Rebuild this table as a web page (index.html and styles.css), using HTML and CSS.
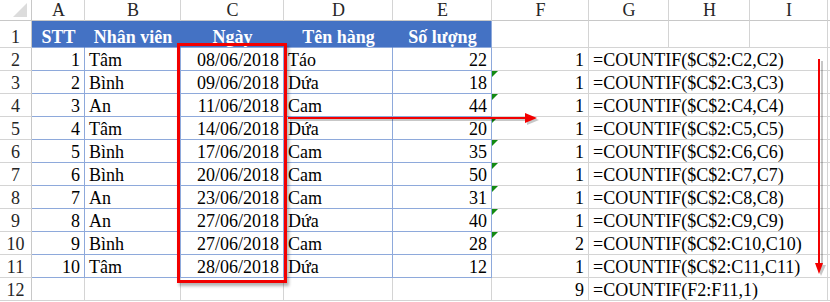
FILE: index.html
```html
<!DOCTYPE html>
<html>
<head>
<meta charset="utf-8">
<link rel="stylesheet" href="styles.css">
</head>
<body>
<div class="sheet">
  <div class="c corner"><span class="tri"></span></div>
  <div class="c hd">A</div><div class="c hd">B</div><div class="c hd">C</div><div class="c hd">D</div><div class="c hd">E</div><div class="c hd">F</div><div class="c hd">G</div><div class="c hd">H</div><div class="c hd">I</div><div class="c hd edge"></div>

  <div class="c rh">1</div>
  <div class="c th">STT</div><div class="c th">Nhân viên</div><div class="c th">Ngày</div><div class="c th">Tên hàng</div><div class="c th last">Số lượng</div>
  <div class="c"></div><div class="c"></div><div class="c"></div><div class="c"></div><div class="c edge"></div>

  <div class="c rh">2</div>
  <div class="c t r">1</div><div class="c t">Tâm</div><div class="c t r">08/06/2018</div><div class="c t">Táo</div><div class="c t r">22</div>
  <div class="c r">1</div><div class="c span3">=COUNTIF($C$2:C2,C2)</div><div class="c edge"></div>

  <div class="c rh">3</div>
  <div class="c t r">2</div><div class="c t">Bình</div><div class="c t r">09/06/2018</div><div class="c t">Dứa</div><div class="c t r">18</div>
  <div class="c r flag">1</div><div class="c span3">=COUNTIF($C$2:C3,C3)</div><div class="c edge"></div>

  <div class="c rh">4</div>
  <div class="c t r">3</div><div class="c t">An</div><div class="c t r">11/06/2018</div><div class="c t">Cam</div><div class="c t r">44</div>
  <div class="c r flag">1</div><div class="c span3">=COUNTIF($C$2:C4,C4)</div><div class="c edge"></div>

  <div class="c rh">5</div>
  <div class="c t r">4</div><div class="c t">Tâm</div><div class="c t r">14/06/2018</div><div class="c t">Dứa</div><div class="c t r">20</div>
  <div class="c r flag">1</div><div class="c span3">=COUNTIF($C$2:C5,C5)</div><div class="c edge"></div>

  <div class="c rh">6</div>
  <div class="c t r">5</div><div class="c t">Bình</div><div class="c t r">17/06/2018</div><div class="c t">Cam</div><div class="c t r">35</div>
  <div class="c r flag">1</div><div class="c span3">=COUNTIF($C$2:C6,C6)</div><div class="c edge"></div>

  <div class="c rh">7</div>
  <div class="c t r">6</div><div class="c t">Bình</div><div class="c t r">20/06/2018</div><div class="c t">Cam</div><div class="c t r">50</div>
  <div class="c r flag">1</div><div class="c span3">=COUNTIF($C$2:C7,C7)</div><div class="c edge"></div>

  <div class="c rh">8</div>
  <div class="c t r">7</div><div class="c t">An</div><div class="c t r">23/06/2018</div><div class="c t">Cam</div><div class="c t r">31</div>
  <div class="c r flag">1</div><div class="c span3">=COUNTIF($C$2:C8,C8)</div><div class="c edge"></div>

  <div class="c rh">9</div>
  <div class="c t r">8</div><div class="c t">An</div><div class="c t r">27/06/2018</div><div class="c t">Dứa</div><div class="c t r">40</div>
  <div class="c r flag">1</div><div class="c span3">=COUNTIF($C$2:C9,C9)</div><div class="c edge"></div>

  <div class="c rh">10</div>
  <div class="c t r">9</div><div class="c t">Bình</div><div class="c t r">27/06/2018</div><div class="c t">Cam</div><div class="c t r">28</div>
  <div class="c r flag">2</div><div class="c span3">=COUNTIF($C$2:C10,C10)</div><div class="c edge"></div>

  <div class="c rh">11</div>
  <div class="c t r">10</div><div class="c t">Tâm</div><div class="c t r">28/06/2018</div><div class="c t">Dứa</div><div class="c t r">12</div>
  <div class="c r">1</div><div class="c span3">=COUNTIF($C$2:C11,C11)</div><div class="c edge"></div>

  <div class="c rh">12</div>
  <div class="c"></div><div class="c"></div><div class="c"></div><div class="c"></div><div class="c"></div>
  <div class="c r">9</div><div class="c span3">=COUNTIF(F2:F11,1)</div><div class="c edge"></div>

  <div class="highlight"></div>
  <svg class="arrows" width="830" height="302" viewBox="0 0 830 302">
    <g class="shadow">
      <rect x="290" y="119" width="238" height="2"></rect>
      <polygon points="527,115 539,120 527,125"></polygon>
      <rect x="821" y="61" width="2" height="204"></rect>
      <polygon points="817,265 826,265 821,276"></polygon>
    </g>
    <g class="arrow">
      <rect x="288" y="117" width="238" height="2"></rect>
      <polygon points="525,113 537,118 525,123"></polygon>
      <rect x="818" y="59" width="2" height="204"></rect>
      <polygon points="815,263 823,263 819,274"></polygon>
    </g>
  </svg>
</div>
</body>
</html>
```

FILE: styles.css
```css
html, body {
  margin: 0;
  padding: 0;
  background: #ffffff;
}

.sheet {
  position: relative;
  display: grid;
  grid-template-columns: 32px 53px 96px 103px 109px 99px 97px 80px 81px 78px 2px;
  grid-template-rows: 21px 27px repeat(11, 23px);
  width: 830px;
  height: 302px;
  overflow: hidden;
  font-family: "Liberation Serif", "Times New Roman", serif;
  font-size: 18px;
  line-height: 20px;
  color: #000;
}

.c {
  box-sizing: border-box;
  border-right: 1px solid #d4d4d4;
  border-bottom: 1px solid #d4d4d4;
  display: flex;
  align-items: flex-end;
  padding: 0 3px 0 4px;
  white-space: nowrap;
  overflow: hidden;
  position: relative;
}

.edge {
  border-right: none;
}

.corner {
  border-color: #c8c8c8;
}

.tri {
  position: absolute;
  left: 13px;
  top: 3px;
  width: 0;
  height: 0;
  border-left: 14px solid transparent;
  border-bottom: 14px solid #dcdcdc;
}

.hd {
  justify-content: center;
  color: #262626;
  border-bottom-color: #c8c8c8;
}

.rh {
  justify-content: center;
  color: #262626;
  border-right-color: #c8c8c8;
  padding: 0;
}

.th {
  background: #4472c4;
  color: #ffffff;
  font-weight: bold;
  justify-content: center;
  border-right-color: #4472c4;
  border-bottom-color: #8ea9db;
}

.th.last {
  border-right-color: #8ea9db;
}

.t {
  border-right-color: #8ea9db;
  border-bottom-color: #8ea9db;
}

.r {
  justify-content: flex-end;
  padding-right: 4px;
}

.span3 {
  grid-column: span 3;
  overflow: visible;
}

.flag::before {
  content: "";
  position: absolute;
  left: 0;
  top: 0;
  width: 0;
  height: 0;
  border-top: 6px solid #138a13;
  border-right: 6px solid transparent;
}

.highlight {
  position: absolute;
  left: 177px;
  top: 43px;
  width: 110px;
  height: 240px;
  box-sizing: border-box;
  border: 3px solid #f20000;
  box-shadow: 2px 3px 3px rgba(0, 0, 0, 0.3);
  pointer-events: none;
}

.arrows {
  position: absolute;
  left: 0;
  top: 0;
  pointer-events: none;
}

.arrows .arrow {
  fill: #f20000;
}

.arrows .shadow {
  fill: rgba(0, 0, 0, 0.22);
}
```
